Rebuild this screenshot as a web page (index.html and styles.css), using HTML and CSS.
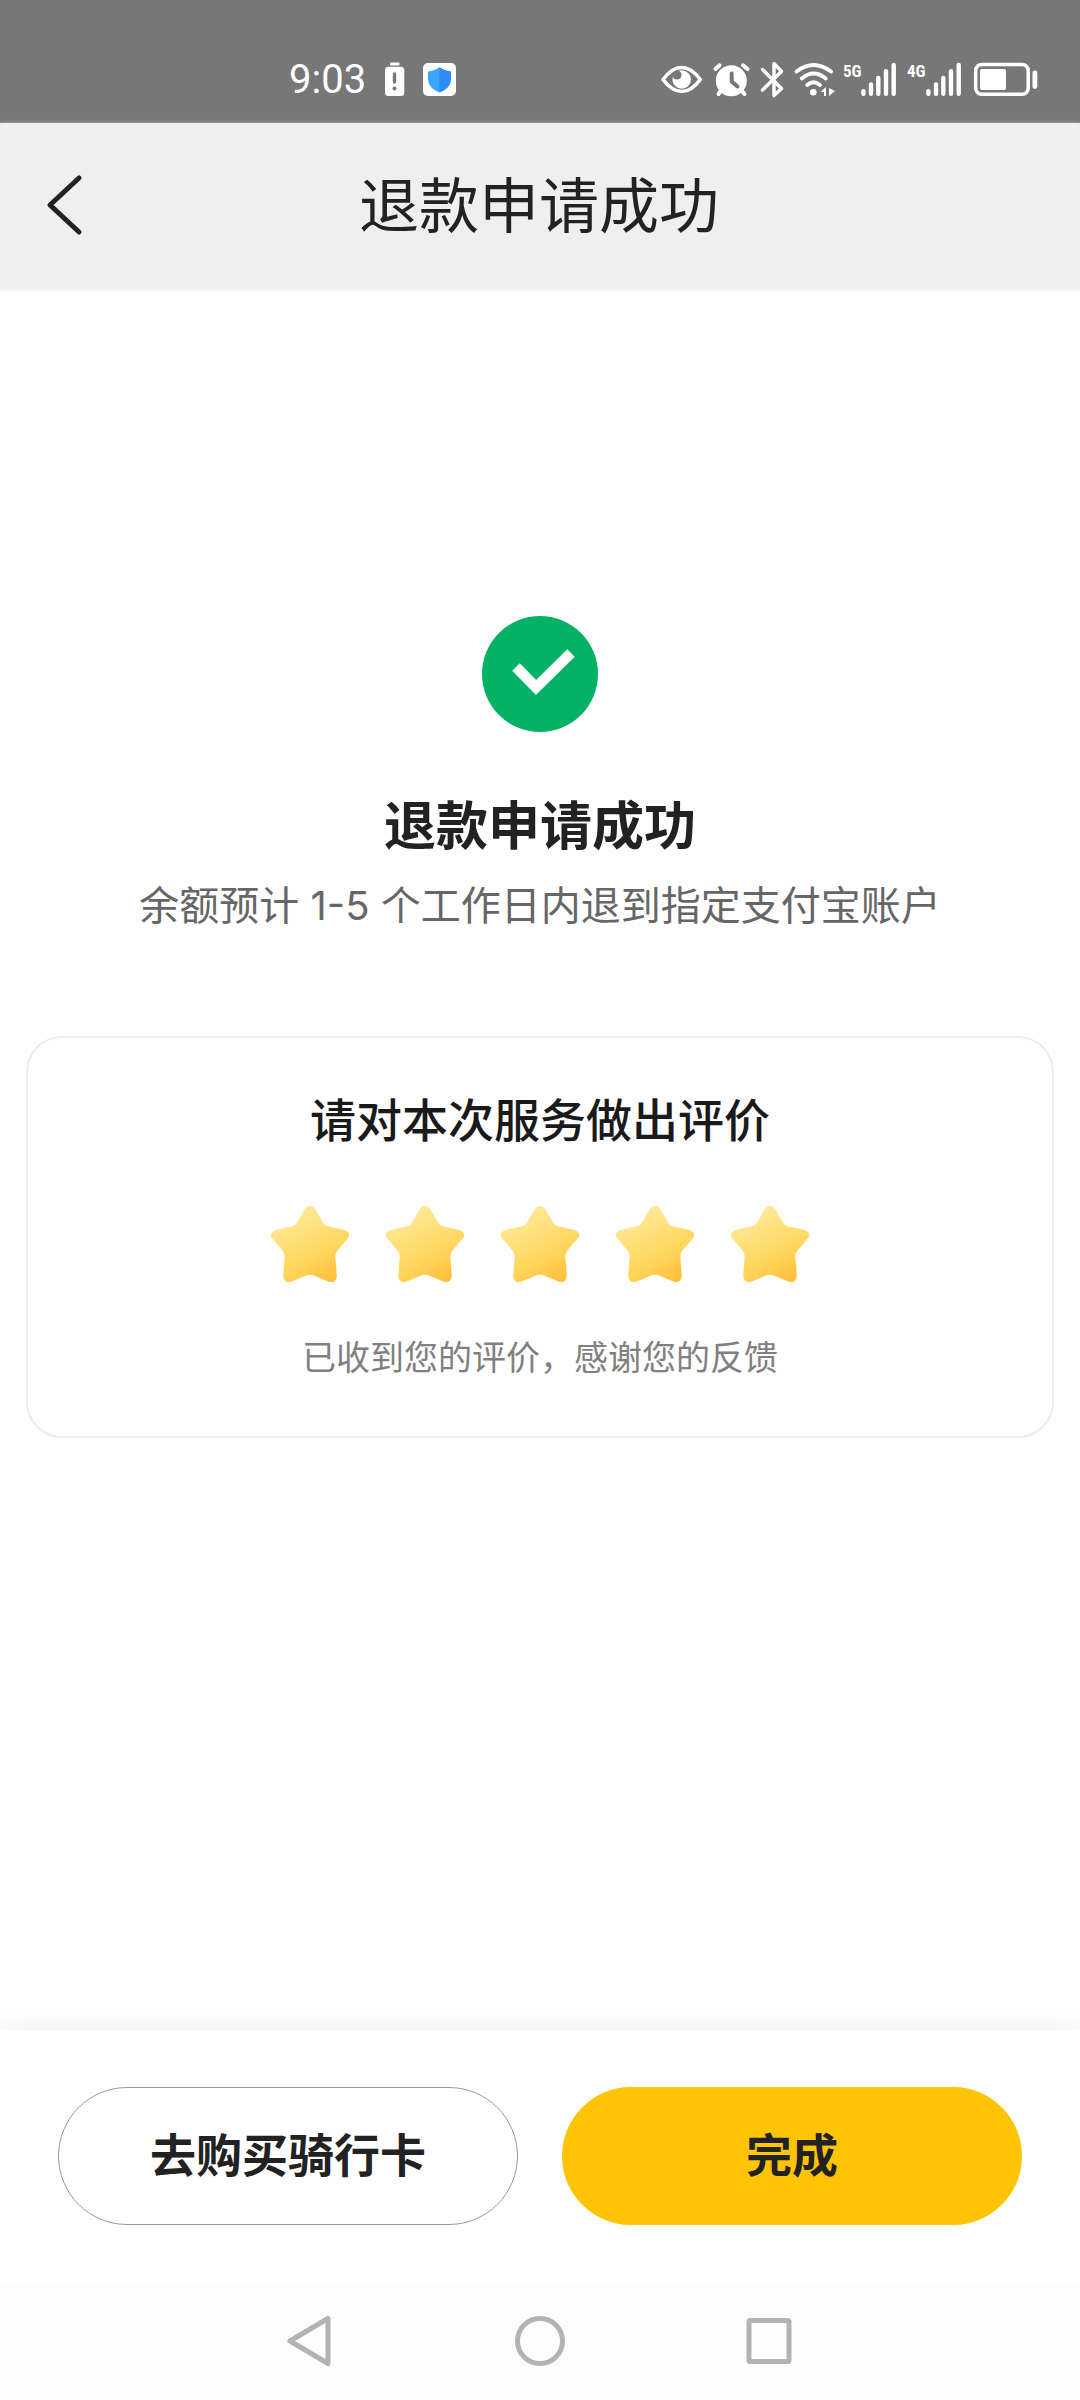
FILE: index.html
```html
<!DOCTYPE html>
<html lang="zh-CN">
<head>
<meta charset="utf-8">
<meta name="viewport" content="width=device-width, initial-scale=1">
<title>退款申请成功</title>
<link rel="stylesheet" href="styles.css">
</head>
<body>
<svg class="defs" aria-hidden="true">
  <defs>
    <linearGradient id="gold" x1="0.25" y1="0.05" x2="0.75" y2="1">
      <stop offset="0" stop-color="#ffeb9c"/>
      <stop offset="0.65" stop-color="#ffd65c"/>
      <stop offset="1" stop-color="#ffbe3c"/>
    </linearGradient>
    <symbol id="star" viewBox="0 0 80 80">
      <path fill="url(#gold)" d="M34.500 5.500Q36.500 2 40 2Q43.500 2 45.500 5.500L52 17Q54.500 21.500 58 22.300L74.500 26Q81 28.500 78.500 33.500L67.500 46.500Q65 49.500 65.300 53L66.800 71.500Q66.500 79.500 59 77.800L44.500 71.800Q40 69.800 35.500 71.800L21 77.800Q13.500 79.500 13.200 71.500L14.700 53Q15 49.500 12.500 46.500L1.500 33.500Q-1 28.500 5.500 26L22 22.300Q25.500 21.500 28 17Z"/>
    </symbol>
    <symbol id="bars" viewBox="0 0 38 40">
      <path fill="none" stroke="#fff" stroke-width="4.400" stroke-linecap="round" d="M3.400 31.200V33.800M11 24.500V33.800M18.300 18V33.800M26 11.200V33.800M33.700 5V33.800"/>
    </symbol>
  </defs>
</svg>

<div class="status">
  <div class="status-left">
    <span class="clock">9:03</span>
    <div class="status-icons">
      <svg width="26" height="40" viewBox="0 0 26 40" aria-hidden="true">
        <rect x="8" y="2.500" width="9.500" height="3" rx="1" fill="#fff"/>
        <rect x="3" y="6.700" width="19.300" height="29.300" rx="3.500" fill="#fff"/>
        <path d="M12.500 14V22" stroke="#777" stroke-width="3.400" stroke-linecap="round"/>
        <circle cx="12.500" cy="28.500" r="2" fill="#777"/>
      </svg>
      <svg width="40" height="40" viewBox="0 0 40 40" aria-hidden="true">
        <rect x="3" y="3" width="33" height="33" rx="5" fill="#fff"/>
        <path d="M19.500 7.300Q24 10.800 31 11.500V19Q31 28 19.500 32.500Q8 28 8 19V11.500Q15 10.800 19.500 7.300Z" fill="#3ba5fb"/>
        <path d="M19.500 7.300Q24 10.800 31 11.500V19Q31 28 19.500 32.500Z" fill="#2f8cf6"/>
      </svg>
    </div>
  </div>
  <div class="status-right">
    <svg width="44" height="40" viewBox="0 0 44 40" aria-hidden="true">
      <path d="M3 19.500Q12 7.500 21.700 7.500T40.300 19.500Q31.500 31.500 21.700 31.500T3 19.500Z" fill="none" stroke="#fff" stroke-width="3.600" stroke-linejoin="round"/>
      <circle cx="21.700" cy="19.500" r="9.300" fill="#fff"/>
      <circle cx="17" cy="15" r="4.600" fill="#777"/>
    </svg>
    <svg width="40" height="40" viewBox="-1 0 40 40" fill="none" stroke="#fff" stroke-width="4" stroke-linecap="round" aria-hidden="true">
      <circle cx="19.300" cy="20.700" r="15.500" fill="#fff" stroke="none"/>
      <path d="M3.500 9L7.500 5.300M31 5.300L35.500 9M6.500 34L10 29M32.500 34L28.500 29"/>
      <path d="M19.700 13.500V21.500L25.500 26.500" stroke="#777" stroke-linejoin="round"/>
    </svg>
    <svg width="28" height="40" viewBox="0 0 28 40" aria-hidden="true">
      <path d="M4.500 9.500L23.500 28.500L16 35.500V3.500L23.500 11.500L4.500 30" fill="none" stroke="#fff" stroke-width="3.400" stroke-linecap="round" stroke-linejoin="round"/>
    </svg>
    <svg width="44" height="40" viewBox="0 0 44 40" aria-hidden="true">
      <path d="M3.500 11.500Q20.500 -1.500 38 11.500M8.800 18.500Q20.500 8.500 32.700 18.500M14.300 25Q20.500 19.500 27 25" fill="none" stroke="#fff" stroke-width="3.800" stroke-linecap="round"/>
      <circle cx="20.300" cy="32.300" r="3.300" fill="#fff"/>
      <path d="M27.500 32L33 27V36H31V32ZM36 28V36L42 31Z" fill="#fff"/>
    </svg>
    <svg width="54" height="40" viewBox="0 0 54 40" aria-label="5G 信号">
      <text class="net" x="-1" y="17">5G</text>
      <use href="#bars" x="16" y="0" width="38" height="40"/>
    </svg>
    <svg width="58" height="40" viewBox="0 0 58 40" aria-label="4G 信号">
      <text class="net" x="2" y="17">4G</text>
      <use href="#bars" x="20" y="0" width="38" height="40"/>
    </svg>
    <svg width="70" height="40" viewBox="-2 0 70 40" aria-hidden="true">
      <rect x="3.700" y="4.500" width="52.500" height="29.800" rx="6" fill="none" stroke="#fff" stroke-width="3.500"/>
      <rect x="8" y="9" width="26" height="21" rx="2" fill="#fff"/>
      <rect x="60.500" y="10.500" width="4.800" height="18.500" rx="2.400" fill="#fff"/>
    </svg>
  </div>
</div>

<header class="header">
  <button class="back" type="button" aria-label="返回">
    <svg width="44" height="72" viewBox="0 0 44 72" aria-hidden="true">
      <path d="M37 8L8 35L37 62" fill="none" stroke="#222" stroke-width="5" stroke-linecap="round" stroke-linejoin="round"/>
    </svg>
  </button>
  <h1 class="header-title">退款申请成功</h1>
</header>

<main class="content">
  <section class="result">
    <svg width="118" height="118" viewBox="0 0 118 118" aria-hidden="true">
      <circle cx="59" cy="59" r="58" fill="#04b265"/>
      <path d="M35 52L55 72.500L90 38" fill="none" stroke="#fff" stroke-width="10.500"/>
    </svg>
    <h2 class="result-title">退款申请成功</h2>
    <p class="result-text">余额预计 1-5 个工作日内退到指定支付宝账户</p>
  </section>

  <section class="card">
    <h3 class="card-title">请对本次服务做出评价</h3>
    <div class="stars" role="group" aria-label="评价">
      <button class="star" type="button" aria-label="1 星"><svg width="80" height="80"><use href="#star"/></svg></button>
      <button class="star" type="button" aria-label="2 星"><svg width="80" height="80"><use href="#star"/></svg></button>
      <button class="star" type="button" aria-label="3 星"><svg width="80" height="80"><use href="#star"/></svg></button>
      <button class="star" type="button" aria-label="4 星"><svg width="80" height="80"><use href="#star"/></svg></button>
      <button class="star" type="button" aria-label="5 星"><svg width="80" height="80"><use href="#star"/></svg></button>
    </div>
    <p class="card-note">已收到您的评价，感谢您的反馈</p>
  </section>
</main>

<footer class="actions">
  <button class="btn btn-outline" type="button">去购买骑行卡</button>
  <button class="btn btn-primary" type="button">完成</button>
</footer>

<nav class="sysnav" aria-label="系统导航">
  <button class="sysnav-btn" type="button" aria-label="后退">
    <svg width="54" height="54" viewBox="0 0 54 54"><path d="M45 4.500V49.500L7 27Z"/></svg>
  </button>
  <button class="sysnav-btn" type="button" aria-label="主页">
    <svg width="54" height="54" viewBox="0 0 54 54"><circle cx="27" cy="27" r="22.500"/></svg>
  </button>
  <button class="sysnav-btn" type="button" aria-label="最近任务">
    <svg width="54" height="54" viewBox="0 0 54 54"><rect x="6" y="6.500" width="40" height="41" rx="1"/></svg>
  </button>
</nav>
</body>
</html>
```
FILE: styles.css
```css
* {
  box-sizing: border-box;
}

body {
  margin: 0;
  min-height: 100vh;
  display: flex;
  flex-direction: column;
  background: #fefefe;
  color: #222;
  font-family: Inter, "Noto Sans CJK SC", sans-serif;
}

h1,
h2,
h3,
p {
  margin: 0;
}

button {
  margin: 0;
  padding: 0;
  border: 0;
  background: none;
  color: inherit;
  font: inherit;
  cursor: pointer;
}

svg {
  display: block;
}

.defs {
  position: absolute;
  width: 0;
  height: 0;
}

/* System status bar */
.status {
  height: 123px;
  padding: 37px 40px 0 289px;
  display: flex;
  align-items: center;
  justify-content: space-between;
  background: #777;
  color: #fff;
}

.status-left {
  display: flex;
  align-items: center;
  gap: 16px;
}

.status-icons {
  display: flex;
  gap: 12px;
}

.status-right {
  display: flex;
  align-items: center;
  gap: 7px;
}

.clock {
  font: 40px/48px Roboto, sans-serif;
}

.net {
  fill: #fff;
  font: bold 17px "Roboto Condensed", Roboto, sans-serif;
}

/* Page header */
.header {
  height: 165px;
  padding: 0 44px 0 42px;
  display: grid;
  grid-template-columns: 1fr auto 1fr;
  align-items: center;
  background: #efefef;
  box-shadow: 0 1px 4px #e4e4e4;
}

.back {
  justify-self: start;
}

.header-title {
  font-size: 60px;
  line-height: 80px;
  font-weight: 400;
}

/* Result */
.content {
  flex: 1;
  padding: 327px 26px 0;
}

.result {
  display: flex;
  flex-direction: column;
  align-items: center;
  text-align: center;
}

.result-title {
  margin-top: 60px;
  font-size: 52px;
  line-height: 68px;
  font-weight: 700;
}

.result-text {
  margin-top: 15px;
  color: #666;
  font-size: 40px;
  line-height: 60px;
}

/* Rating card */
.card {
  margin-top: 100px;
  padding: 52px 24px 48px;
  display: flex;
  flex-direction: column;
  align-items: center;
  border: 2px solid #ececec;
  border-radius: 36px;
  text-align: center;
}

.card-title {
  color: #1a1a1a;
  font-size: 46px;
  line-height: 60px;
  font-weight: 500;
}

.stars {
  margin-top: 54px;
  display: flex;
  gap: 35px;
}

.card-note {
  margin-top: 44px;
  color: #808080;
  font-size: 34px;
  line-height: 60px;
}

/* Bottom actions */
.actions {
  padding: 57px 58px 59px;
  display: grid;
  grid-template-columns: 1fr 1fr;
  gap: 44px;
  background: #fff;
  box-shadow: 0 0 24px rgba(0, 0, 0, 0.07);
}

.btn {
  height: 138px;
  padding-bottom: 8px;
  border-radius: 69px;
  font-size: 46px;
  font-weight: 700;
}

.btn-outline {
  border: 1px solid #999;
}

.btn-primary {
  background: #ffc405;
}

/* System navigation */
.sysnav {
  position: relative;
  height: 116px;
  padding: 0 195px 2px;
  display: grid;
  grid-template-columns: repeat(3, 1fr);
  background: #fdfdfd;
}

.sysnav-btn {
  display: grid;
  place-items: center;
}

.sysnav svg {
  fill: none;
  stroke: #b3b3b3;
  stroke-width: 5;
  stroke-linejoin: round;
}
```
